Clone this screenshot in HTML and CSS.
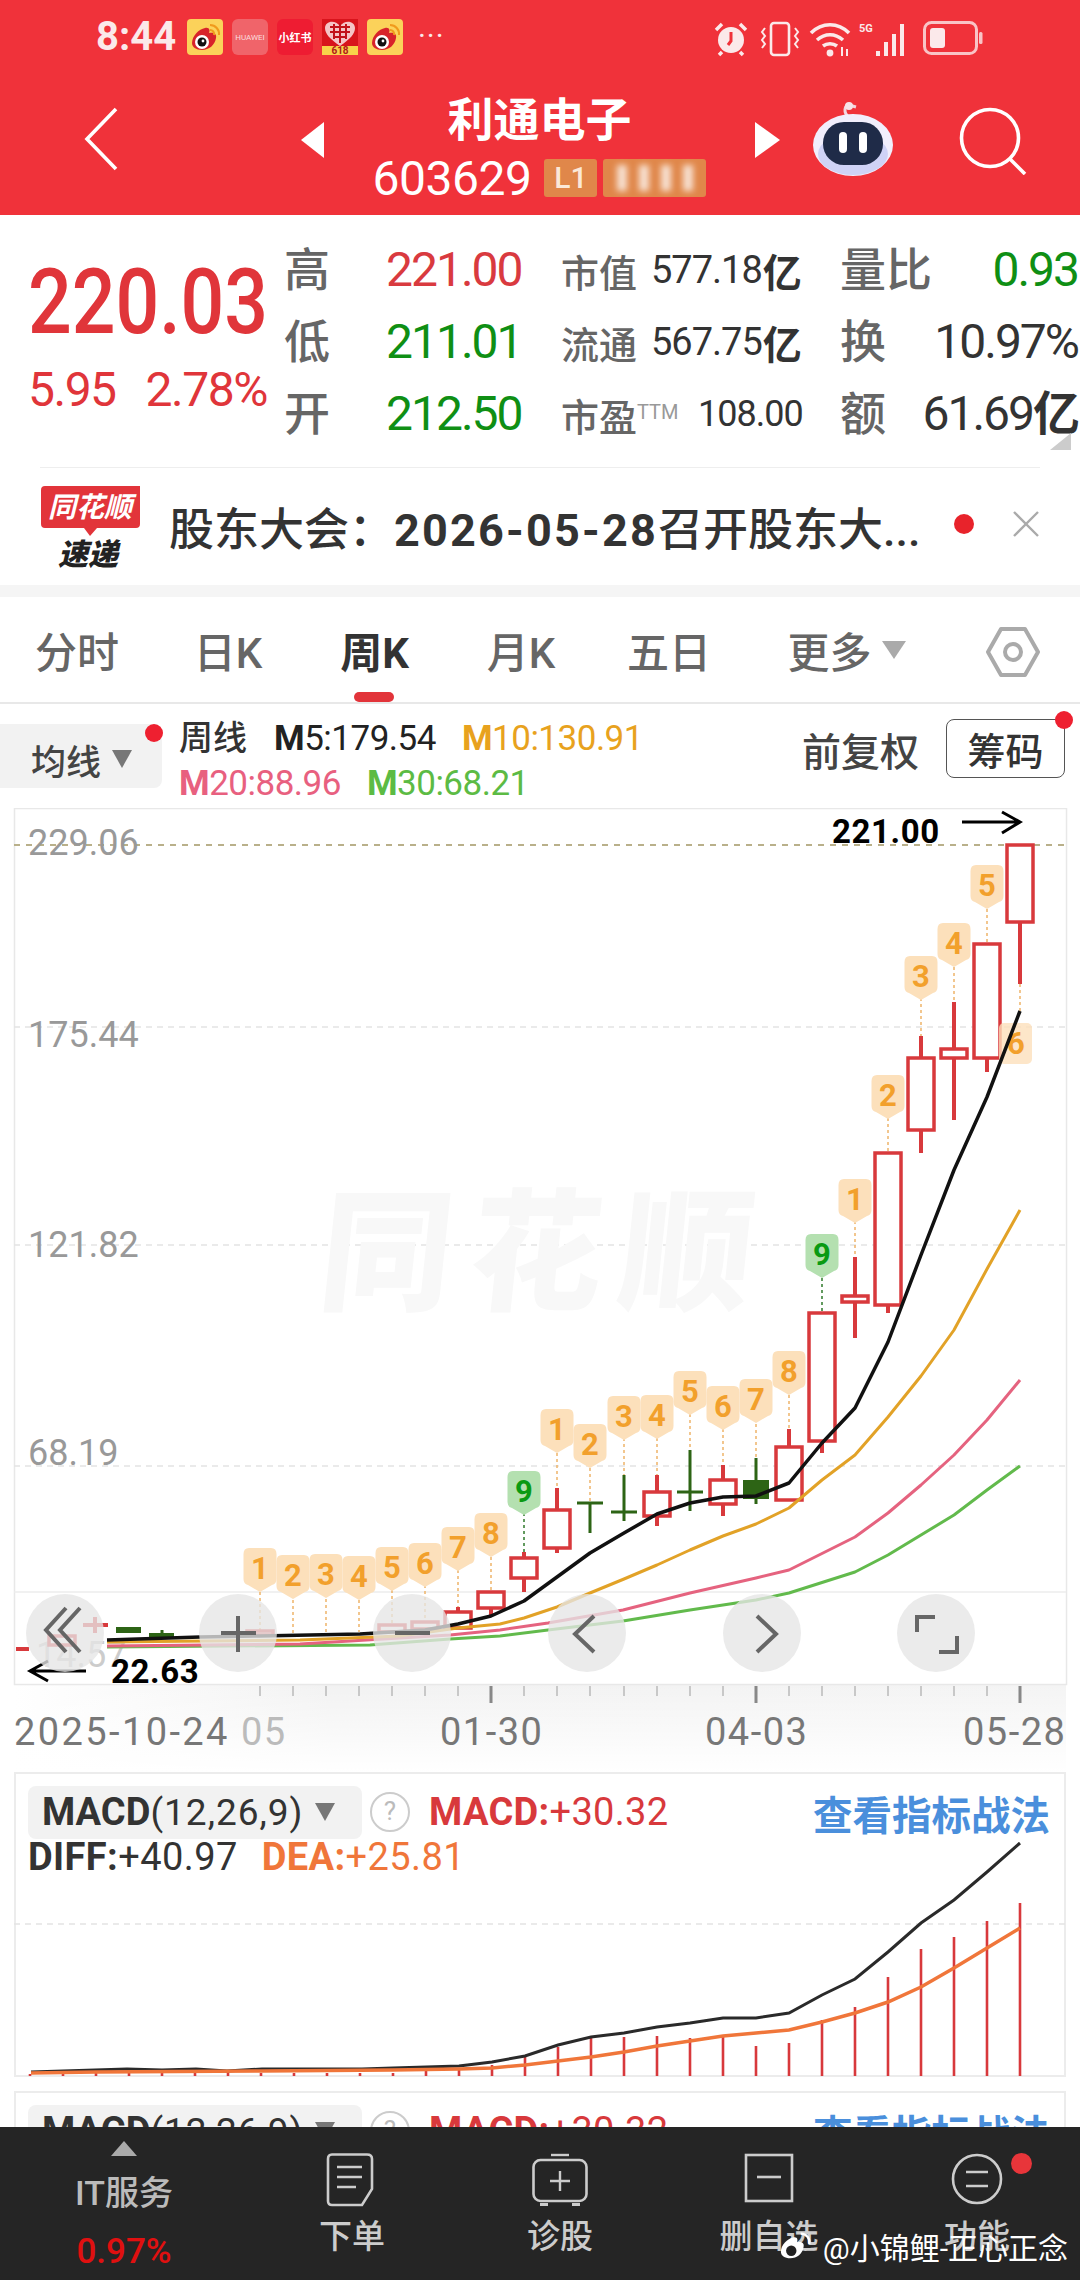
FILE: index.html
```html
<!DOCTYPE html>
<html lang="zh-CN">
<head>
  <meta charset="UTF-8" />
  <meta name="viewport" content="width=device-width, initial-scale=1.0"/>
  <title>利通电子</title>
  <link rel="stylesheet" href="styles.css">
</head>
<body>
  <svg class="defs" width="0" height="0">
    <defs>
      <symbol id="weibo" viewBox="0 0 36 36">
        <rect width="36" height="36" rx="4" fill="#fbd25a"/>
        <path d="M5 24c0-7 7-14 13-15 5-1 5 3 4 5 5-1 8 1 7 5-1 7-7 12-14 12-6 0-10-3-10-7z" fill="#d8232a"/>
        <circle cx="15" cy="23" r="7" fill="#fff"/>
        <circle cx="15" cy="23" r="4.5" fill="#111"/>
        <circle cx="16" cy="22" r="1.4" fill="#fff"/>
        <path d="M23 6a9 9 0 0 1 9 10M23 11a4 4 0 0 1 4 5" fill="none" stroke="#f09a1c" stroke-width="2"/>
      </symbol>
      <path id="tag" d="M-11 0H11Q16.5 0 16.5 6V31Q16.5 36 12 37L0 44L-12 37Q-16.5 36-16.5 31V6Q-16.5 0-11 0Z"/>
    </defs>
  </svg>

  <main class="page">
    <!-- red header -->
    <header class="top">
      <div class="statusbar">
        <span class="clock">8:44</span>
        <svg class="nt"><use href="#weibo"/></svg>
        <span class="nt nt-huawei">HUAWEI</span>
        <span class="nt nt-xhs">小红书</span>
        <svg class="nt" viewBox="0 0 36 36">
          <rect y="26" width="36" height="10" fill="#f8d24a"/>
          <rect width="36" height="27" fill="#d8141c"/>
          <path d="M18 27C8 20 3 15 3 9c0-7 10-9 15-2 5-7 15-5 15 2 0 6-5 11-15 18z" fill="#fff" opacity=".75"/>
          <path d="M8 8h20M8 13h20M11 18h14M18 4v20M12 5v15M24 5v15" stroke="#c2121a" stroke-width="2"/>
          <text class="nt-618" x="18" y="35">618</text>
        </svg>
        <svg class="nt"><use href="#weibo"/></svg>
        <span class="more-dots">···</span>
        <div class="sys">
          <svg class="s-alarm" viewBox="0 0 36 36">
            <circle cx="18" cy="19" r="13" fill="#fbe9ea"/>
            <path d="M18 11v9l-3 4" stroke="#f0323a" stroke-width="3" fill="none"/>
            <path d="M3 9l6-6M33 9l-6-6M9 31l-3 3M27 31l3 3" stroke="#fbe9ea" stroke-width="3.5"/>
          </svg>
          <svg class="s-vib" viewBox="0 0 40 36">
            <rect x="11" y="2" width="18" height="32" rx="3" fill="none" stroke="#fbe9ea" stroke-width="2.6"/>
            <path d="M5 7l-3 4 3 4-3 4 3 4-3 4M35 7l3 4-3 4 3 4-3 4 3 4" fill="none" stroke="#fbe9ea" stroke-width="2"/>
          </svg>
          <svg class="s-wifi" viewBox="0 0 42 36">
            <path d="M2 12c11-11 27-11 38 0M8 19c8-7 18-7 26 0M14 25c4-3 10-3 14 0" fill="none" stroke="#fbe9ea" stroke-width="3.6"/>
            <circle cx="21" cy="32" r="3.4" fill="#fbe9ea"/>
            <path d="M33 26v9M38 28v7" stroke="#fbe9ea" stroke-width="2"/>
          </svg>
          <span class="s-5g">5G</span>
          <svg class="s-sig" viewBox="0 0 34 36">
            <path d="M3 35v-5M11 35V21M19 35V13M27 35V3" stroke="#fbe9ea" stroke-width="4"/>
          </svg>
          <svg class="s-bat" viewBox="0 0 60 34">
            <rect x="1.5" y="1.5" width="52" height="31" rx="7" fill="none" stroke="#fbe9ea" stroke-width="3" opacity=".8"/>
            <rect x="7" y="7" width="15" height="20" rx="3" fill="#fbe9ea"/>
            <rect x="56" y="11" width="3.5" height="12" rx="1.5" fill="#fbe9ea" opacity=".8"/>
          </svg>
        </div>
      </div>
      <nav class="navbar">
        <svg class="back" viewBox="0 0 34 64"><path d="M32 2L3 32l29 30" fill="none" stroke="#fff" stroke-width="3.6"/></svg>
        <span class="tri tri-left"></span>
        <div class="stock">
          <div class="stock-name">利通电子</div>
          <div class="stock-code">
            <span>603629</span>
            <span class="lv">L1</span>
            <span class="lv lv-blur"><i></i><i></i><i></i><i></i></span>
          </div>
        </div>
        <span class="tri tri-right"></span>
        <div class="nav-right">
          <svg class="robot" viewBox="0 0 84 76">
            <path d="M38 16c-6-4-5-12 1-13M38 4l7 2" fill="none" stroke="#f3d6df" stroke-width="3"/>
            <circle cx="38" cy="5" r="4" fill="#f7e3e8"/>
            <ellipse cx="42" cy="44" rx="40" ry="31" fill="#f1eefc"/>
            <ellipse cx="42" cy="53" rx="35" ry="21" fill="#cfd2f6"/>
            <rect x="12" y="21" width="60" height="43" rx="21" fill="#1f2b48"/>
            <rect x="28" y="31" width="8" height="21" rx="4" fill="#fff"/>
            <rect x="48" y="31" width="8" height="21" rx="4" fill="#fff"/>
          </svg>
          <svg class="search" viewBox="0 0 68 68">
            <circle cx="31" cy="31" r="28.5" fill="none" stroke="#fff" stroke-width="3.6"/>
            <path d="M50 51l16 16" stroke="#fff" stroke-width="3.6"/>
          </svg>
        </div>
      </nav>
    </header>

    <!-- quote -->
    <section class="quote">
      <div class="price">
        <div class="price-now">220.03</div>
        <div class="price-chg"><span>5.95</span><span>2.78%</span></div>
      </div>
      <span class="q-label">高</span><span class="q-val red">221.00</span>
      <span class="q-mid"><span class="q-sub">市值</span><span class="q-num">577.18</span><span class="q-yi">亿</span></span>
      <span class="q-end"><span class="q-label">量比</span><span class="q-val green">0.93</span></span>

      <span class="q-label">低</span><span class="q-val green">211.01</span>
      <span class="q-mid"><span class="q-sub">流通</span><span class="q-num">567.75</span><span class="q-yi">亿</span></span>
      <span class="q-end"><span class="q-label">换</span><span class="q-val dark">10.97%</span></span>

      <span class="q-label">开</span><span class="q-val green">212.50</span>
      <span class="q-mid"><span class="q-sub">市盈<sup>TTM</sup></span><span class="q-num q-num-r">108.00</span></span>
      <span class="q-end"><span class="q-label">额</span><span class="q-val dark">61.69<span class="yi-big">亿</span></span></span>
      <span class="corner"></span>
    </section>

    <!-- news -->
    <section class="news">
      <svg class="news-logo" viewBox="0 0 100 82">
        <path d="M4 0H99V38Q99 42 95 42H56L49 50L43 42H4Q0 42 0 38V4Q0 0 4 0Z" fill="#e2343a"/>
        <text class="logo-a" x="49" y="31">同花顺</text>
        <text class="logo-b" x="47" y="79">速递</text>
      </svg>
      <div class="news-text">股东大会：<span class="news-date">2026-05-28</span>召开股东大...</div>
      <span class="news-dot"></span>
      <svg class="news-x" viewBox="0 0 26 26"><path d="M1 1l24 24M25 1L1 25" stroke="#aaa" stroke-width="2.4"/></svg>
    </section>
    <div class="band"></div>

    <!-- period tabs -->
    <div class="tabs">
      <span class="tab">分时</span>
      <span class="tab">日K</span>
      <span class="tab active">周K</span>
      <span class="tab">月K</span>
      <span class="tab">五日</span>
      <span class="tab">更多<i class="caret caret-more"></i></span>
      <span class="tab">
        <svg class="gear" viewBox="0 0 54 52">
          <path d="M15 3H39L52 26L39 49H15L2 26Z" fill="none" stroke="#aaa" stroke-width="4" stroke-linejoin="round"/>
          <circle cx="27" cy="26" r="8" fill="none" stroke="#aaa" stroke-width="4"/>
        </svg>
      </span>
    </div>

    <!-- legend -->
    <div class="legend">
      <div class="pill">均线<i class="caret"></i><b class="dot"></b></div>
      <div class="legend-vals">
        <div><span class="lg-name">周线</span><span class="lg"><b>M</b>5:179.54</span><span class="lg c-m10"><b>M</b>10:130.91</span></div>
        <div><span class="lg c-m20"><b>M</b>20:88.96</span><span class="lg c-m30"><b>M</b>30:68.21</span></div>
      </div>
      <div class="legend-right">
        <span class="fq">前复权</span>
        <span class="chip">筹码<b class="dot"></b></span>
      </div>
    </div>

    <!-- k line chart, svg uses page coordinates -->
    <svg class="kline" viewBox="0 808 1080 964">
      <defs>
        <linearGradient id="axisbg" x1="0" x2="1" y1="0" y2="0">
          <stop offset="0" stop-color="#fff"/><stop offset=".3" stop-color="#f2f2f2"/><stop offset="1" stop-color="#f4f4f4"/>
        </linearGradient>
        <linearGradient id="axisfade" x1="0" x2="0" y1="0" y2="1">
          <stop offset="0" stop-color="#fff" stop-opacity="0"/><stop offset="1" stop-color="#fff"/>
        </linearGradient>
      </defs>
      <rect x="14" y="1684" width="1052" height="88" fill="url(#axisbg)"/>
      <rect x="14" y="1684" width="1052" height="88" fill="url(#axisfade)"/>
      <rect class="frame" x="14.5" y="808.5" width="1052" height="876"/>
      <path class="grid" d="M14 1027H1066M14 1245H1066M14 1466H1066"/>
      <path class="grid-solid" d="M14 1592H1066"/>
      <path class="topline" d="M14 845H1066"/>
      <text class="wm" transform="translate(316 1300) skewX(-6)">同花顺</text>

      <text class="ylabel" x="28" y="855">229.06</text>
      <text class="ylabel" x="28" y="1047">175.44</text>
      <text class="ylabel" x="28" y="1257">121.82</text>
      <text class="ylabel" x="28" y="1465">68.19</text>
      <text class="ylabel ylabel-low" x="36" y="1667">14.57</text>

      <!-- dotted leader lines -->
      <path class="lead" d="M987 909V944M954 967V1002M921 998V1036M888 1118V1153M855 1221V1257M789 1395V1429M756 1424V1458M723 1429V1465M690 1414V1450M657 1438V1475M624 1438V1475M590 1468V1503M557 1453V1488M491 1557V1592M458 1570V1607M425 1585V1622M392 1590V1625M359 1600V1632M326 1599V1633M293 1600V1633M260 1592V1630M1020 984V1011"/>
      <path class="lead lead-g" d="M822 1278V1313M524 1513V1552"/>

      <!-- candles -->
      <g class="cd">
        <path d="M1020 922V984M987 1058V1072M954 1002V1120M921 1036V1153M888 1305V1313M855 1257V1338M822 1441V1453M789 1429V1447M723 1465V1516M657 1475V1526M557 1488V1553M524 1552V1592M491 1608V1615M458 1607V1612"/>
        <rect x="1007" y="845" width="26" height="77"/>
        <rect x="974" y="944" width="26" height="114"/>
        <rect x="941" y="1049" width="26" height="9"/>
        <rect x="908" y="1058" width="26" height="72"/>
        <rect x="875" y="1153" width="26" height="152"/>
        <rect x="842" y="1296" width="26" height="6"/>
        <rect x="809" y="1313" width="26" height="128"/>
        <rect x="776" y="1447" width="26" height="53"/>
        <rect x="710" y="1480" width="26" height="24"/>
        <rect x="644" y="1492" width="26" height="24"/>
        <rect x="544" y="1510" width="26" height="38"/>
        <rect x="511" y="1558" width="26" height="20"/>
        <rect x="478" y="1592" width="26" height="16"/>
        <rect x="445" y="1612" width="26" height="16"/>
        <rect x="412" y="1622" width="26" height="7"/>
        <rect x="379" y="1625" width="26" height="7"/>
        <rect x="247" y="1631" width="26" height="4"/>
        <rect x="49" y="1636" width="26" height="9"/>
      </g>
      <path class="cd-red" d="M16 1649H29M83 1625H108M95 1617V1633"/>
      <path class="cd-g" d="M756 1458V1504M690 1450V1511M677 1492H703M624 1475V1521M611 1512H637M590 1503V1533M577 1503H603M162 1630V1637"/>
      <rect class="cd-fill" x="743" y="1480" width="26" height="19"/>
      <rect class="cd-fill" x="116" y="1627" width="25" height="6"/>
      <rect class="cd-fill" x="149" y="1633" width="25" height="4"/>

      <!-- TD count tags -->
      <g class="tags">
        <use href="#tag" x="987" y="865"/><use href="#tag" x="954" y="923"/><use href="#tag" x="921" y="956"/>
        <use href="#tag" x="888" y="1075"/><use href="#tag" x="855" y="1179"/><use href="#tag" x="789" y="1351"/>
        <use href="#tag" x="756" y="1379"/><use href="#tag" x="723" y="1386"/><use href="#tag" x="690" y="1371"/>
        <use href="#tag" x="657" y="1395"/><use href="#tag" x="624" y="1396"/><use href="#tag" x="590" y="1424"/>
        <use href="#tag" x="557" y="1409"/><use href="#tag" x="491" y="1513"/><use href="#tag" x="458" y="1527"/>
        <use href="#tag" x="425" y="1543"/><use href="#tag" x="392" y="1547"/><use href="#tag" x="359" y="1556"/>
        <use href="#tag" x="326" y="1554"/><use href="#tag" x="293" y="1555"/><use href="#tag" x="260" y="1548"/>
      </g>
      <rect class="tag-flat" x="999" y="1023" width="33" height="41" rx="5"/>
      <g class="tags-g">
        <use href="#tag" x="822" y="1234"/><use href="#tag" x="524" y="1471"/>
      </g>
      <g class="tag-num">
        <text x="987" y="896">5</text><text x="954" y="954">4</text><text x="921" y="987">3</text>
        <text x="888" y="1106">2</text><text x="855" y="1210">1</text><text x="789" y="1382">8</text>
        <text x="756" y="1410">7</text><text x="723" y="1417">6</text><text x="690" y="1402">5</text>
        <text x="657" y="1426">4</text><text x="624" y="1427">3</text><text x="590" y="1455">2</text>
        <text x="557" y="1440">1</text><text x="491" y="1544">8</text><text x="458" y="1558">7</text>
        <text x="425" y="1574">6</text><text x="392" y="1578">5</text><text x="359" y="1587">4</text>
        <text x="326" y="1585">3</text><text x="293" y="1586">2</text><text x="260" y="1579">1</text>
        <text x="1016" y="1054">6</text>
      </g>
      <g class="tag-num tag-num-g">
        <text x="822" y="1265">9</text><text x="524" y="1502">9</text>
      </g>

      <!-- moving averages -->
      <polyline class="ma c30" points="107,1647 370,1645 450,1639 500,1636 548,1630 623,1621 690,1610 756,1600 789,1593 855,1572 888,1555 954,1515 987,1490 1020,1466"/>
      <polyline class="ma c20" points="107,1646 300,1644 450,1635 500,1630 548,1623 623,1610 690,1593 756,1578 789,1570 855,1537 888,1513 921,1485 954,1455 987,1420 1020,1380"/>
      <polyline class="ma c10" points="107,1642 300,1640 400,1636 458,1628 500,1624 524,1618 557,1607 590,1593 624,1579 657,1565 690,1550 723,1536 756,1524 789,1508 822,1480 855,1455 888,1417 921,1376 954,1330 987,1269 1020,1210"/>
      <polyline class="ma c5" points="107,1640 200,1637 260,1636 360,1634 425,1630 458,1624 491,1616 524,1601 557,1577 590,1553 624,1533 657,1514 690,1503 723,1497 756,1496 789,1483 822,1443 855,1408 888,1342 921,1255 954,1170 987,1097 1020,1011"/>

      <!-- high / low marks -->
      <text class="mark" x="832" y="843">221.00</text>
      <path class="arrow" d="M962 822H1020M1002 812L1020 822L1002 833"/>
      <text class="mark" x="111" y="1683">22.63</text>
      <path class="arrow" d="M86 1671H30M48 1661L30 1671L48 1681"/>

      <!-- floating controls -->
      <g class="fab">
        <circle cx="65" cy="1633" r="39"/><circle cx="238" cy="1633" r="39"/><circle cx="412" cy="1633" r="39"/>
        <circle cx="587" cy="1633" r="39"/><circle cx="762" cy="1633" r="39"/><circle cx="936" cy="1633" r="39"/>
      </g>
      <path class="fab-ic" d="M66 1608L46 1630L66 1652M80 1608L60 1630L80 1652M221 1633H256M238 1616V1652M395 1633H430M594 1616L575 1634L594 1652M757 1616L776 1634L757 1652M917 1632V1617H935M939 1652H957V1636"/>

      <!-- x axis -->
      <path class="tick" d="M260 1686V1696M293 1686V1696M326 1686V1696M359 1686V1696M392 1686V1696M425 1686V1696M458 1686V1696M524 1686V1696M557 1686V1696M590 1686V1696M624 1686V1696M657 1686V1696M690 1686V1696M723 1686V1696M789 1686V1696M822 1686V1696M855 1686V1696M888 1686V1696M921 1686V1696M954 1686V1696M987 1686V1696"/>
      <path class="tick tick-long" d="M491 1686V1703M756 1686V1703M1020 1686V1703"/>
      <text class="xlabel xlabel-long" x="14" y="1745">2025-10-24</text>
      <text class="xlabel xlabel-fade" x="241" y="1745">05</text>
      <text class="xlabel" x="440" y="1745">01-30</text>
      <text class="xlabel" x="705" y="1745">04-03</text>
      <text class="xlabel" x="963" y="1745">05-28</text>
    </svg>

    <!-- macd panels -->
    <section class="macd">
      <div class="macd-head">
        <span class="macd-pill"><b>MACD</b>(12,26,9)<i class="caret"></i></span>
        <span class="help">?</span>
        <span class="macd-val"><b>MACD:</b>+30.32</span>
        <a class="macd-link">查看指标战法</a>
      </div>
      <div class="macd-sub"><span class="c-diff"><b>DIFF:</b>+40.97</span><span class="c-dea"><b>DEA:</b>+25.81</span></div>
      <svg class="macd-plot" viewBox="0 1772 1080 305">
        <path class="grid" d="M14 1924H1066"/>
        <path class="bars" d="M1020 1903V2076M987 1921V2076M954 1937V2076M921 1949V2076M888 1977V2076M855 2007V2076M822 2020V2076M789 2043V2076M756 2046V2076M723 2037V2076M690 2038V2076M657 2036V2076M624 2037V2076M591 2037V2076M558 2047V2076M525 2055V2076M492 2065V2076M459 2068V2076M426 2068V2076M393 2073V2076M360 2073V2076M327 2073V2076M294 2073V2076M261 2073V2076M228 2072V2076M195 2072V2076M162 2072V2076M129 2072V2076M96 2073V2076M63 2074V2076M30 2074V2076"/>
        <polyline class="diff" points="31,2072 127,2069 162,2070 196,2069 227,2071 262,2069 362,2069 393,2068 459,2066 492,2062 525,2056 558,2045 591,2037 624,2033 657,2027 690,2023 723,2018 756,2018 789,2013 822,1995 855,1979 888,1952 921,1923 954,1900 987,1872 1020,1843"/>
        <polyline class="dea" points="31,2073 96,2072 262,2071 393,2070 459,2069 492,2068 525,2065 558,2061 591,2057 624,2052 657,2046 690,2041 723,2036 756,2033 789,2030 822,2022 855,2013 888,2002 921,1987 954,1968 987,1948 1020,1928"/>
      </svg>
    </section>
    <section class="macd macd-next">
      <div class="macd-head">
        <span class="macd-pill"><b>MACD</b>(12,26,9)<i class="caret"></i></span>
        <span class="help">?</span>
        <span class="macd-val"><b>MACD:</b>+30.32</span>
        <a class="macd-link">查看指标战法</a>
      </div>
    </section>
  </main>

  <!-- bottom bar -->
  <footer class="bottom">
    <div class="bt bt-sector">
      <i class="up-tri"></i>
      <span class="sector-name">IT服务</span>
      <span class="sector-chg">0.97%</span>
    </div>
    <div class="bt">
      <svg class="bt-ic" viewBox="0 0 56 54">
        <path d="M8 1.5H43Q48 1.5 48 6V36L38 52H8Q4 52 4 48V6Q4 1.5 8 1.5Z" fill="none" stroke="#ccc" stroke-width="2.6"/>
        <path d="M13 14H38M13 24H38M13 34H32" stroke="#ccc" stroke-width="2.4"/>
      </svg>
      <span>下单</span>
    </div>
    <div class="bt">
      <svg class="bt-ic" viewBox="0 0 56 54">
        <path d="M19 2H37" stroke="#ccc" stroke-width="2.4"/>
        <rect x="1.5" y="7" width="53" height="41" rx="7" fill="none" stroke="#ccc" stroke-width="2.6"/>
        <path d="M28 18V38M18 28H38" stroke="#ccc" stroke-width="2.4"/>
        <path d="M8 50H16V53H8ZM40 50H48V53H40Z" fill="#ccc"/>
      </svg>
      <span>诊股</span>
    </div>
    <div class="bt">
      <svg class="bt-ic" viewBox="0 0 56 54">
        <rect x="5" y="2" width="46" height="46" fill="none" stroke="#ccc" stroke-width="2.6"/>
        <path d="M16 24H40" stroke="#ccc" stroke-width="2.6"/>
      </svg>
      <span>删自选</span>
    </div>
    <div class="bt">
      <svg class="bt-ic" viewBox="0 0 56 54">
        <circle cx="28" cy="26" r="24" fill="none" stroke="#ccc" stroke-width="2.6"/>
        <path d="M17 19H39M17 33H39" stroke="#ccc" stroke-width="2.6"/>
      </svg>
      <span>功能</span>
      <b class="dot dot-bt"></b>
    </div>
    <div class="credit">
      <svg class="credit-logo" viewBox="0 0 36 36">
        <path d="M2 24c0-7 7-14 13-15 5-1 5 3 4 5 5-1 8 1 7 5-1 7-7 12-14 12-6 0-10-3-10-7z" fill="#fff"/>
        <circle cx="13" cy="23" r="5.5" fill="#222"/>
        <path d="M23 5a9 9 0 0 1 9 11" fill="none" stroke="#fff" stroke-width="2.4"/>
      </svg>
      <span>@小锦鲤-正心正念</span>
    </div>
  </footer>
</body>
</html>
```

FILE: styles.css
```css
* {
  margin: 0;
  padding: 0;
  box-sizing: border-box;
}

body {
  width: 1080px;
  height: 2280px;
  overflow: hidden;
  background: #fff;
  color: #333;
  font-family: Roboto, "Noto Sans CJK SC", sans-serif;
  display: flex;
  flex-direction: column;
}

i {
  font-style: normal;
}

.defs {
  display: block;
  position: absolute;
}

.page {
  flex: 1;
  min-height: 0;
  overflow: hidden;
}

/* header */
.top {
  height: 215px;
  background: #f0323a;
  color: #fff;
}

.statusbar {
  height: 74px;
  padding: 19px 0 0 96px;
  display: flex;
  align-items: flex-start;
}

.clock {
  width: 91px;
  font-size: 40px;
  line-height: 36px;
  font-weight: 700;
  color: #fbe9ea;
}

.nt {
  width: 36px;
  height: 36px;
  margin-right: 9px;
  flex: none;
  display: flex;
  align-items: center;
  justify-content: center;
}

.nt-huawei {
  background: #f0646a;
  border-radius: 6px;
  font-size: 8px;
  color: #fbdcdd;
}

.nt-xhs {
  background: #ee1c32;
  border-radius: 6px;
  font-size: 11px;
  font-weight: 700;
  white-space: nowrap;
}

.nt-618 {
  font-size: 10px;
  font-weight: 700;
  fill: #b01818;
  text-anchor: middle;
}

.more-dots {
  margin-left: 6px;
  font-size: 30px;
  line-height: 34px;
  letter-spacing: 1px;
  color: #fbe9ea;
}

.sys {
  margin-left: auto;
  padding-right: 97px;
  display: flex;
  align-items: flex-start;
}

.s-alarm {
  width: 36px;
  height: 36px;
  margin-top: 2px;
}

.s-vib {
  width: 40px;
  height: 36px;
  margin: 2px 0 0 11px;
}

.s-wifi {
  width: 42px;
  height: 36px;
  margin: 2px 0 0 9px;
}

.s-5g {
  width: 16px;
  margin-left: 8px;
  font-size: 11px;
  line-height: 14px;
  margin-top: 3px;
  font-weight: 700;
  color: #fbe9ea;
}

.s-sig {
  width: 34px;
  height: 36px;
  margin-top: 2px;
}

.s-bat {
  width: 60px;
  height: 34px;
  margin: 2px 0 0 14px;
}

.navbar {
  height: 141px;
  padding-left: 84px;
  display: grid;
  grid-template-columns: 217px 23px 431px 25px 1fr;
  align-items: center;
}

.back {
  width: 34px;
  height: 64px;
  margin-top: -12px;
}

.tri {
  width: 0;
  height: 0;
  border-top: 18px solid transparent;
  border-bottom: 18px solid transparent;
  margin-top: -9px;
}

.tri-left {
  border-right: 23px solid #fff;
}

.tri-right {
  border-left: 25px solid #fff;
}

.stock {
  text-align: center;
}

.stock-name {
  font-size: 46px;
  line-height: 64px;
  font-weight: 700;
}

.stock-code {
  height: 46px;
  display: flex;
  justify-content: center;
  align-items: center;
  gap: 6px;
  font-size: 48px;
  letter-spacing: -0.5px;
  margin-top: 3px;
}

.stock-code > span:first-child {
  margin-right: 7px;
}

.lv {
  width: 53px;
  height: 38px;
  border-radius: 3px;
  background: #e0874a;
  font-size: 30px;
  line-height: 38px;
  letter-spacing: 0;
  color: #fbe8d8;
  font-weight: 500;
}

.lv-blur {
  width: 103px;
  display: flex;
  justify-content: space-around;
  align-items: center;
  padding: 0 8px;
}

.lv-blur i {
  width: 10px;
  height: 26px;
  background: #fff;
  opacity: .75;
  filter: blur(3px);
}

.nav-right {
  padding-left: 31px;
  display: flex;
  align-items: center;
}

.robot {
  width: 84px;
  height: 76px;
  margin-top: -12px;
}

.search {
  width: 68px;
  height: 68px;
  margin: -8px 0 0 64px;
}

/* quote */
.quote {
  position: relative;
  height: 252px;
  padding: 19px 2px 0 28px;
  display: grid;
  grid-template-columns: 256px 102px 175px 279px 1fr;
  grid-auto-rows: 72px;
  align-items: center;
}

.price {
  grid-row: 1 / span 3;
  align-self: start;
  padding-top: 25px;
}

.price-now {
  width: 276px;
  font-size: 90px;
  line-height: 88px;
  font-weight: 500;
  color: #e0353a;
  transform: scaleX(.855);
  transform-origin: left;
}

.price-chg {
  display: flex;
  gap: 30px;
  margin-top: 19px;
  font-size: 48px;
  line-height: 48px;
  letter-spacing: -1.5px;
  color: #e0353a;
}

.q-label {
  font-size: 46px;
  line-height: 60px;
  color: #666;
  font-weight: 500;
}

.q-val {
  font-size: 48px;
  line-height: 60px;
  letter-spacing: -2px;
}

.red {
  color: #d93a3f;
}

.green {
  color: #0f8f14;
}

.dark {
  color: #333;
}

.q-mid {
  display: flex;
  align-items: center;
}

.q-sub {
  width: 90px;
  font-size: 38px;
  font-weight: 500;
  color: #666;
  white-space: nowrap;
}

.q-sub sup {
  font-size: 20px;
  font-weight: 400;
  color: #999;
  vertical-align: 12px;
  line-height: 0;
}

.q-num {
  font-size: 38px;
  letter-spacing: -1px;
}

.q-num-r {
  margin-left: 47px;
  font-size: 36px;
}

.q-yi {
  font-size: 39px;
  font-weight: 700;
  margin-left: 1px;
}

.q-end {
  display: flex;
  justify-content: space-between;
  align-items: center;
}

.yi-big {
  font-size: 47px;
  font-weight: 700;
}

.corner {
  position: absolute;
  right: 9px;
  bottom: 17px;
  border-left: 21px solid transparent;
  border-bottom: 17px solid #ccc;
}

/* news */
.news {
  height: 118px;
  margin: 0 40px;
  border-top: 1px solid #eee;
  display: flex;
  align-items: center;
}

.news-logo {
  width: 100px;
  height: 82px;
  margin-left: 1px;
  flex: none;
}

.logo-a {
  font-size: 28px;
  font-weight: 700;
  font-style: italic;
  fill: #fff;
  text-anchor: middle;
}

.logo-b {
  font-size: 30px;
  font-weight: 900;
  font-style: italic;
  fill: #222;
  text-anchor: middle;
}

.news-text {
  margin-left: 28px;
  width: 785px;
  font-size: 45px;
  font-weight: 500;
  color: #333;
  white-space: nowrap;
}

.news-date {
  letter-spacing: 2.2px;
  font-weight: 700;
}

.news-dot {
  width: 20px;
  height: 20px;
  border-radius: 50%;
  background: #e8232b;
  margin-top: -6px;
}

.news-x {
  width: 26px;
  height: 26px;
  margin: -6px 0 0 39px;
}

.band {
  height: 12px;
  background: #f5f5f5;
}

/* tabs */
.tabs {
  height: 107px;
  border-bottom: 2px solid #e8e8e8;
  display: grid;
  grid-template-columns: 154px 148px 145px 148px 148px 207px 126px;
}

.tab {
  position: relative;
  display: flex;
  align-items: center;
  justify-content: center;
  font-size: 42px;
  font-weight: 500;
  color: #666;
}

.tab.active {
  color: #333;
  font-weight: 700;
}

.tab.active::after {
  content: "";
  position: absolute;
  left: 52px;
  bottom: 0;
  width: 40px;
  height: 10px;
  border-radius: 5px;
  background: #e2343a;
}

.caret {
  display: inline-block;
  width: 0;
  height: 0;
  border-left: 10px solid transparent;
  border-right: 10px solid transparent;
  border-top: 18px solid #777;
}

.caret-more {
  margin-left: 10px;
  border-left-width: 12px;
  border-right-width: 12px;
  border-top-color: #aaa;
}

.gear {
  width: 54px;
  height: 52px;
  margin-top: 4px;
}

/* legend */
.legend {
  height: 104px;
  display: flex;
  align-items: flex-start;
}

.pill {
  position: relative;
  width: 162px;
  height: 64px;
  margin-top: 20px;
  padding: 6px 0 0 31px;
  border-radius: 0 8px 8px 0;
  background: #f2f2f2;
  display: flex;
  align-items: center;
  gap: 11px;
  font-size: 35px;
  font-weight: 500;
  color: #444;
}

.dot {
  position: absolute;
  width: 18px;
  height: 18px;
  border-radius: 50%;
  background: #ee2030;
}

.pill .dot {
  top: 0;
  right: -1px;
}

.legend-vals {
  margin-left: 17px;
  padding-top: 12px;
  font-size: 35px;
  line-height: 45px;
  letter-spacing: -0.5px;
  white-space: nowrap;
}

.lg-name {
  font-size: 34px;
  font-weight: 500;
  margin-right: 27px;
  letter-spacing: 0;
}

.lg {
  margin-right: 26px;
  color: #222;
}

.lg b {
  font-weight: 700;
}

.c-m10 {
  color: #e8a21e;
}

.c-m20 {
  color: #e8607f;
}

.c-m30 {
  color: #5cbb44;
}

.legend-right {
  margin-left: auto;
  padding: 15px 15px 0 0;
  display: flex;
  align-items: center;
  gap: 27px;
}

.fq {
  font-size: 39px;
  font-weight: 500;
  color: #444;
}

.chip {
  position: relative;
  width: 119px;
  height: 59px;
  border: 1.5px solid #555;
  border-radius: 8px;
  display: flex;
  align-items: center;
  justify-content: center;
  font-size: 38px;
  font-weight: 500;
  color: #333;
}

.chip .dot {
  top: -9px;
  right: -9px;
}

/* k line */
.kline {
  display: block;
  width: 1080px;
  height: 964px;
}

.frame {
  fill: none;
  stroke: #e8e8e8;
  stroke-width: 1.5;
}

.grid {
  fill: none;
  stroke: #e4e4e4;
  stroke-width: 1.5;
  stroke-dasharray: 6 5;
}

.grid-solid {
  stroke: #ececec;
  stroke-width: 1.5;
}

.topline {
  stroke: #b9b08a;
  stroke-width: 2;
  stroke-dasharray: 6 6;
}

.wm {
  font-size: 132px;
  font-weight: 900;
  letter-spacing: 18px;
  fill: #f8f8f8;
}

.ylabel {
  font-size: 36px;
  fill: #999;
}

.ylabel-low {
  fill: #ccc;
}

.lead {
  fill: none;
  stroke: #eeb46a;
  stroke-width: 1.5;
  stroke-dasharray: 3 3;
}

.lead-g {
  stroke: #2f7a2a;
}

.cd path {
  stroke: #d8393c;
  stroke-width: 4;
  fill: none;
}

.cd rect {
  fill: #fff;
  stroke: #d8393c;
  stroke-width: 3.5;
}

.cd-red {
  stroke: #d8393c;
  stroke-width: 4;
  fill: none;
}

.cd-g {
  stroke: #2d6415;
  stroke-width: 3;
  fill: none;
}

.cd-fill {
  fill: #2d6415;
}

.tags use,
.tag-flat {
  fill: #fce0bb;
}

.tag-flat {
  opacity: .8;
}

.tags-g use {
  fill: #b4e0b0;
}

.tag-num text {
  font-size: 31px;
  font-weight: 700;
  text-anchor: middle;
  fill: #f2a02c;
}

.tag-num-g text {
  fill: #0a9a12;
}

.ma {
  fill: none;
  stroke-width: 3;
  stroke-linejoin: round;
}

.c5 {
  stroke: #111;
  stroke-width: 3.5;
}

.c10 {
  stroke: #e2a227;
}

.c20 {
  stroke: #e5637f;
}

.c30 {
  stroke: #62ba4c;
}

.mark {
  font-size: 33px;
  font-weight: 700;
  letter-spacing: .6px;
  fill: #000;
}

.arrow {
  fill: none;
  stroke: #000;
  stroke-width: 3;
}

.fab circle {
  fill: #e6e6e6;
  fill-opacity: .78;
}

.fab-ic {
  fill: none;
  stroke: #666;
  stroke-width: 4;
}

.tick {
  fill: none;
  stroke: #c8c8c8;
  stroke-width: 2;
}

.tick-long {
  stroke: #888;
  stroke-width: 3;
}

.xlabel {
  font-size: 38px;
  letter-spacing: 1.5px;
  fill: #777;
}

.xlabel-long {
  letter-spacing: 2.4px;
}

.xlabel-fade {
  fill: #bbb;
}

/* macd */
.macd {
  position: relative;
  height: 305px;
  margin: 0 14px 14px;
  border: 2px solid #ececec;
  padding: 11px 14px 0 12px;
}

.macd-next {
  margin-bottom: 0;
}

.macd-head {
  display: flex;
  align-items: center;
  height: 54px;
}

.macd-pill {
  width: 334px;
  height: 53px;
  padding-left: 14px;
  border-radius: 8px;
  background: #f2f2f2;
  display: flex;
  align-items: center;
  font-size: 37px;
  letter-spacing: 1px;
  color: #333;
  white-space: nowrap;
}

.macd-pill b {
  font-weight: 700;
  font-size: 38px;
  letter-spacing: 0;
}

.macd-pill .caret {
  margin-left: 12px;
}

.help {
  width: 40px;
  height: 40px;
  margin-left: 8px;
  border: 2px solid #ccc;
  border-radius: 50%;
  text-align: center;
  font-size: 26px;
  line-height: 35px;
  color: #bbb;
}

.macd-val {
  margin-left: 19px;
  font-size: 38px;
  letter-spacing: .3px;
  color: #d8393c;
}

.macd-link {
  margin-left: auto;
  font-size: 39.5px;
  font-weight: 700;
  color: #4a8fdc;
}

.macd-sub {
  display: flex;
  gap: 24px;
  margin-top: -4px;
  font-size: 38px;
  line-height: 44px;
  letter-spacing: .4px;
}

.c-diff {
  color: #333;
}

.c-dea {
  color: #f0763a;
}

.macd-plot {
  position: absolute;
  left: -16px;
  top: -2px;
  width: 1080px;
  height: 305px;
  pointer-events: none;
}

.bars {
  fill: none;
  stroke: #d8393c;
  stroke-width: 2.6;
}

.diff {
  fill: none;
  stroke: #2a2a2a;
  stroke-width: 3;
}

.dea {
  fill: none;
  stroke: #f0763a;
  stroke-width: 3.5;
}

/* bottom bar */
.bottom {
  position: relative;
  height: 153px;
  flex: none;
  background: #252525;
  display: grid;
  grid-template-columns: 248px 208px 208px 210px 1fr;
  color: #ccc;
}

.bt {
  position: relative;
  display: flex;
  flex-direction: column;
  align-items: center;
  padding-top: 26px;
  font-size: 33px;
  font-weight: 500;
  line-height: 40px;
}

.bt span {
  margin-top: 10px;
}

.bt-ic {
  width: 56px;
  height: 54px;
  flex: none;
}

.bt-sector {
  padding-top: 14px;
}

.up-tri {
  border-left: 13px solid transparent;
  border-right: 13px solid transparent;
  border-bottom: 15px solid #aaa;
}

.bt .sector-name {
  margin-top: 20px;
  font-size: 34px;
  line-height: 34px;
  color: #bbb;
}

.bt .sector-chg {
  margin-top: 25px;
  font-size: 35px;
  line-height: 34px;
  color: #e01010;
}

.dot-bt {
  top: 26px;
  right: 48px;
  width: 21px;
  height: 21px;
  background: #e8353a;
}

.credit {
  position: absolute;
  right: 12px;
  bottom: 12px;
  display: flex;
  align-items: center;
  gap: 10px;
  font-size: 30px;
  color: #fff;
  white-space: nowrap;
}

.credit-logo {
  width: 34px;
  height: 34px;
}
```
